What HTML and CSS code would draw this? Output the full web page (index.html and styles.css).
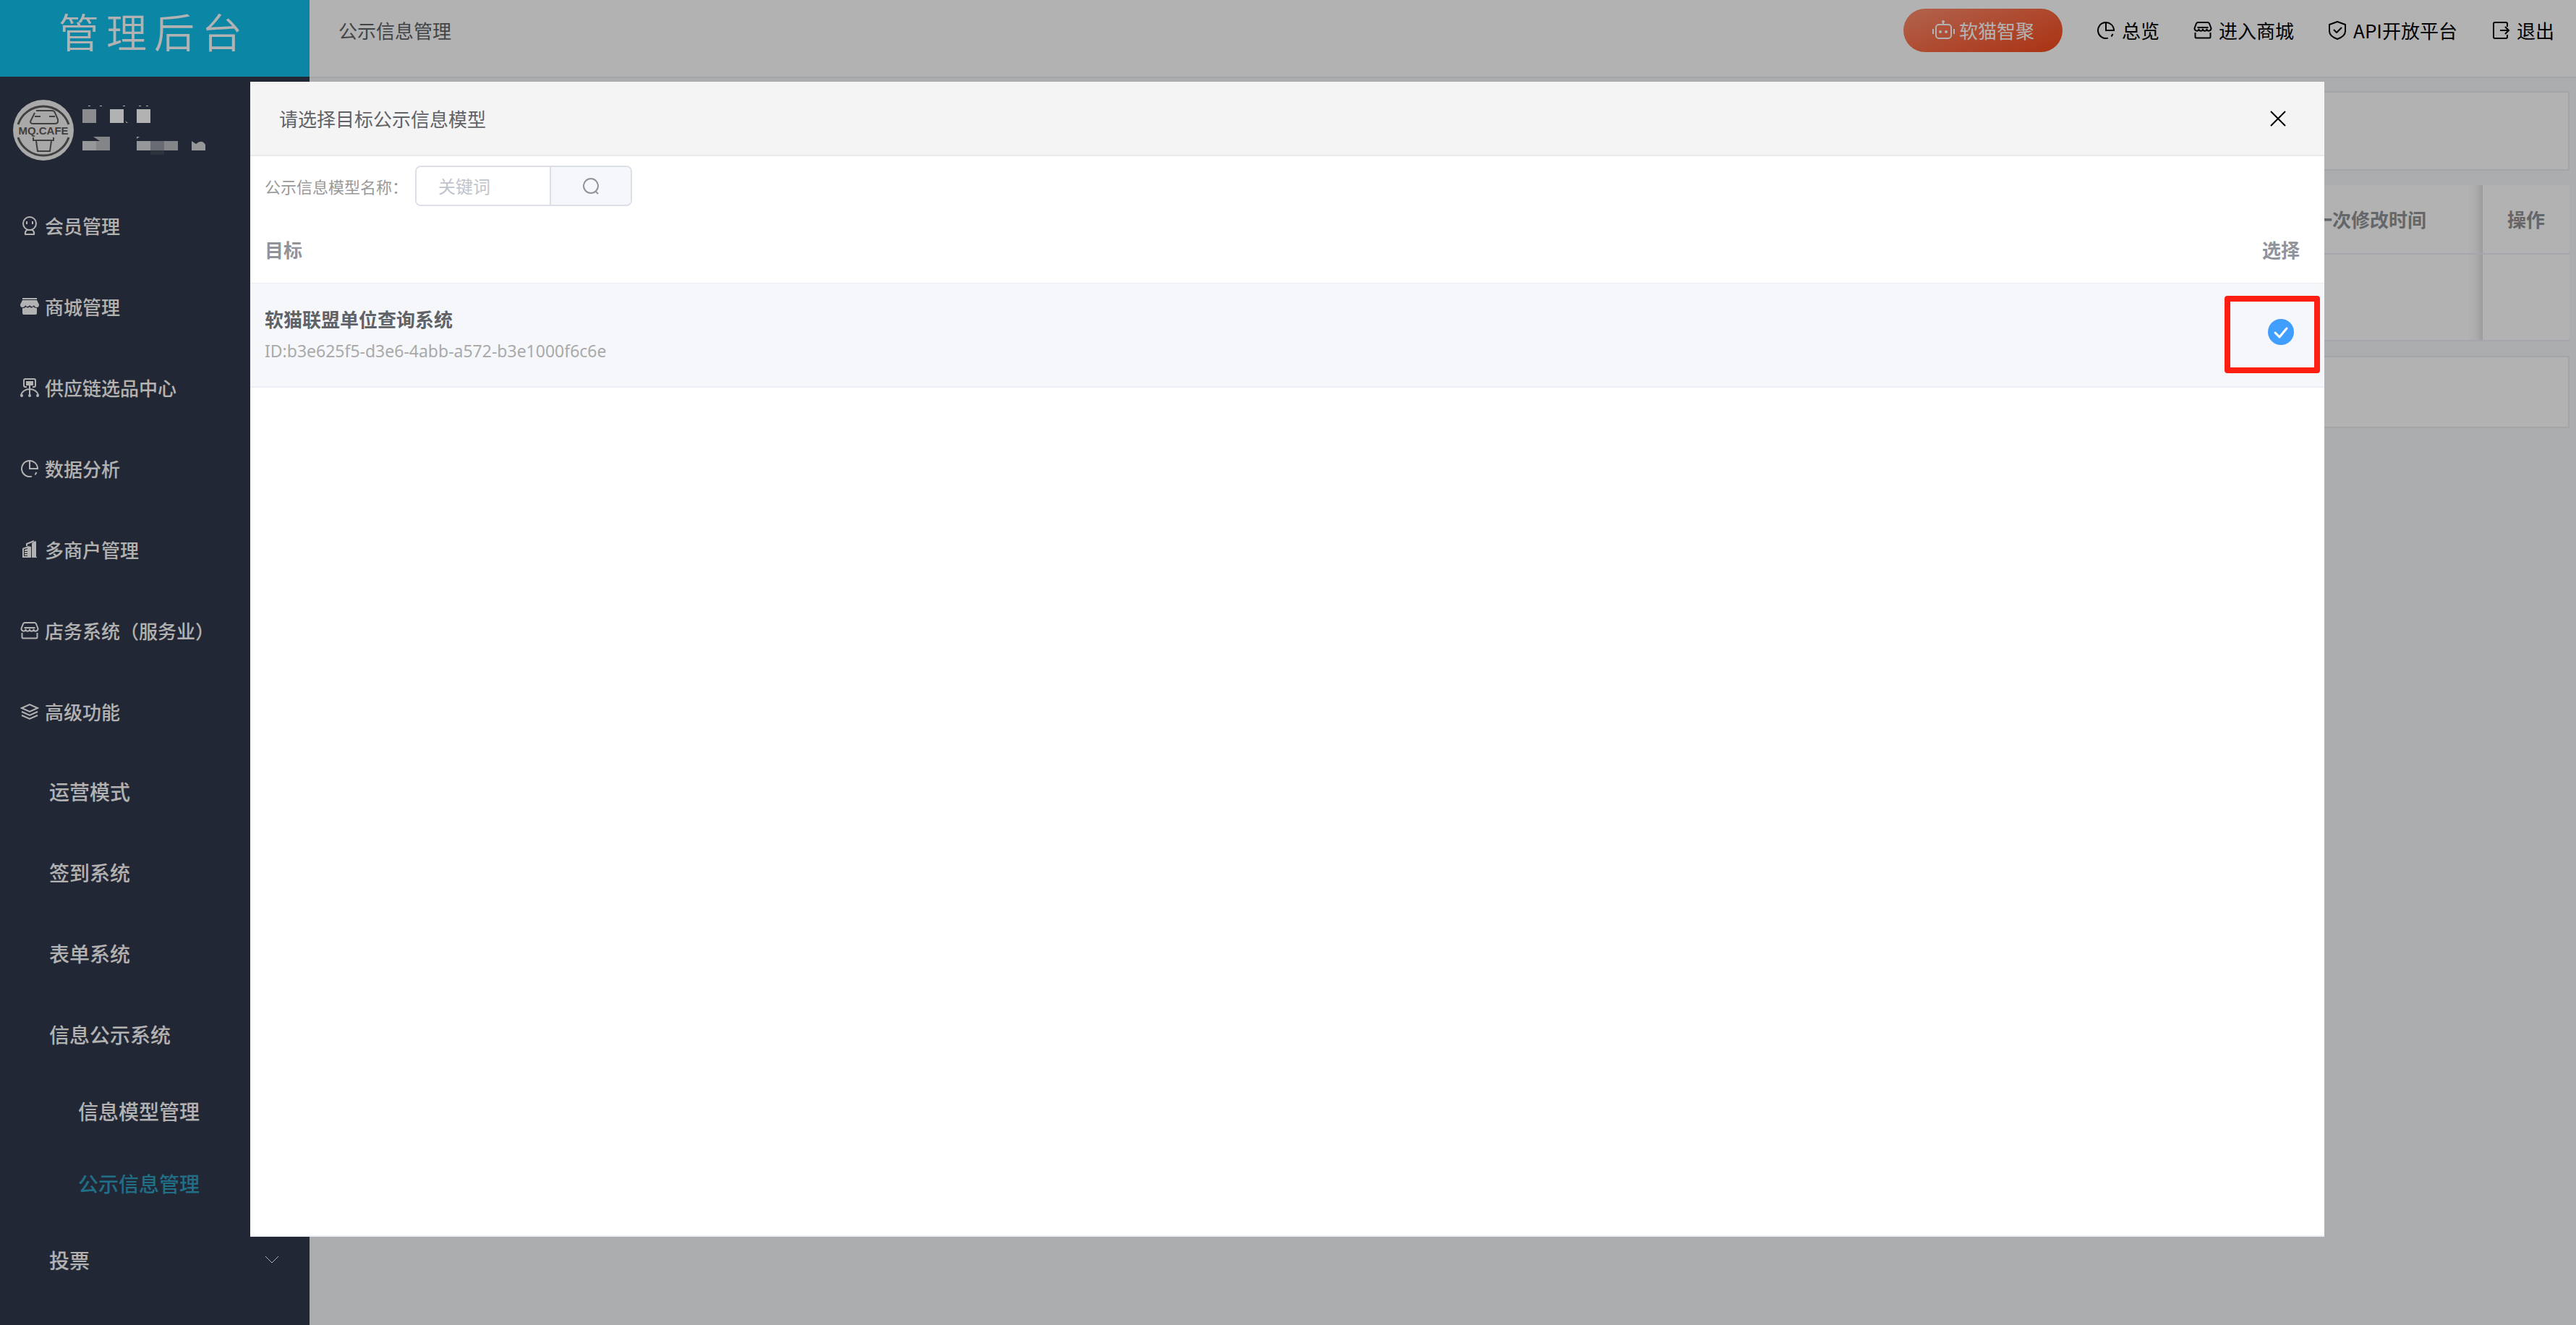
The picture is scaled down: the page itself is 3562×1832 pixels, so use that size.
FILE: index.html
```html
<!DOCTYPE html>
<html lang="zh-CN">
<head>
<meta charset="utf-8">
<title>公示信息管理</title>
<link rel="stylesheet" href="styles.css">
</head>
<body>
<svg class="defs" aria-hidden="true">
  <symbol id="i-pie" viewBox="0 0 26 26"><path fill="none" stroke="currentColor" d="M13 2v11h11A11 11 0 1 0 16 23.600M20.500 21.500l2-3.500"/></symbol>
  <symbol id="i-shop" viewBox="0 0 26 26"><path fill="none" stroke="currentColor" stroke-linejoin="round" d="M6 2h14q1 0 2 1.500l2.500 6.500c0 4-5 5-6 1.500-1 3-4.500 3-5.500 0-1 3-4.500 3-5.500 0-1 3.500-6 2.500-6-1.500L4 3.500Q5 2 6 2zM5.500 9h15M2.500 16v6q0 1.500 1.500 1.500h18q1.500 0 1.500-1.500v-6"/></symbol>
</svg>
<div class="app">
  <aside class="side">
    <div class="logo">管理后台</div>
    <div class="user">
      <svg class="avatar" viewBox="0 0 84 84" role="img" aria-label="MQ.CAFE">
        <circle cx="42" cy="42" r="42" fill="#f2f2f2"/>
        <g fill="none" stroke="#5c5c5c" stroke-width="2"><path d="M7 34a37 37 0 0 1 70 0M7 52a37 37 0 0 0 70 0" stroke-width="3"/><path d="M32 15h22q3 0 4 3l4 9v4q-1 2-4 2H28q-4 0-4-3l6-12M30 23h8M50 23h8M29 33h28M28 52v4h28v-4M32 57l2 14h17l2-14"/></g>
        <text x="42" y="48" text-anchor="middle" class="avatar-text">MQ.CAFE</text>
      </svg>
      <svg class="mask" viewBox="0 0 172 76" aria-hidden="true">
        <path fill="#c8c8ce" d="M0 13h19v19H0z"/>
        <path fill="#fff" d="M38 13h19v19H38zM75 13h19v19H75zM8 8h3v1H8zM24 8h3v1h-3zM56 8h3v1h-3zM78 8h3v1h-3zM88 8h3v1h-3zM59 29l4 3h-2z"/>
        <path fill="#d7d8dc" d="M0 57h19v13H0zM75 51h4l-4 3zM75 57h19v13H75zM151 57l6 4q8-7 13 1v8h-19z"/>
        <path fill="#bebfc5" d="M15 51h23v19H19V57h5zM113 57h19v13h-19z"/>
        <path fill="#969aa5" d="M94 57h19v13H94z"/>
        <path fill="#414857" d="M94 70h19v6H94z"/>
      </svg>
    </div>
    <nav class="menu">
      <a class="item" href="#"><svg class="ico" viewBox="0 0 26 26"><g fill="none" stroke="currentColor"><circle cx="13" cy="10" r="9"/><path d="M9 7v4M17 7v4M9 19h8q3 3 2 6H7q-1-3 2-6z"/></g></svg>会员管理</a>
      <a class="item" href="#"><svg class="ico" viewBox="0 0 26 26"><path fill="currentColor" d="M3 1h20v2H3zM3 4h20l3 6q0 4-3 4-3 0-4-3-3 4-6 0-3 4-6 0-1 3-4 3-3 0-3-4zM3 15q4 0 5-2 2 3 5 0 2 3 5 0 2 2 5 2v7q0 2-2 2H5q-2 0-2-2z"/></svg>商城管理</a>
      <a class="item" href="#"><svg class="ico" viewBox="0 0 26 26"><path fill="none" stroke="currentColor" d="M9 12H7q-2 0-2-2V3q0-2 2-2h12q2 0 2 2v7q0 2-2 2h-2M13 9v16M1 24c2-12 22-12 24 0"/><path fill="currentColor" d="M8 4h10v6H8z"/><circle cx="2" cy="24" r="2" fill="currentColor"/><circle cx="13" cy="24" r="2" fill="currentColor"/><circle cx="24" cy="24" r="2" fill="currentColor"/></svg>供应链选品中心</a>
      <a class="item" href="#"><svg class="ico"><use href="#i-pie"/></svg>数据分析</a>
      <a class="item" href="#"><svg class="ico" viewBox="0 0 26 26"><path fill="currentColor" d="M16 4l5-3 1 1v21h1v1h-7zM3 11l8-3 4 1v15H3zM5 12v10h5v-1H6v-2h4v-1H6v-2h4v-1H6v-2l4-1v-1z"/><path fill="none" stroke="currentColor" d="M9 8V5l10-4"/></svg>多商户管理</a>
      <a class="item" href="#"><svg class="ico"><use href="#i-shop"/></svg>店务系统（服务业）</a>
      <a class="item" href="#"><svg class="ico" viewBox="0 0 26 26"><path fill="none" stroke="currentColor" d="M2 8l11-5 11 5-11 5zM2 13l11 5 11-5M2 18l11 5 11-5"/></svg>高级功能</a>
      <a class="item sub" href="#">运营模式</a>
      <a class="item sub" href="#">签到系统</a>
      <a class="item sub" href="#">表单系统</a>
      <a class="item sub" href="#">信息公示系统</a>
      <a class="item leaf" href="#">信息模型管理</a>
      <a class="item leaf active" href="#">公示信息管理</a>
      <a class="item sub" href="#">投票<svg class="chev" viewBox="0 0 20 12"><path fill="none" stroke="currentColor" d="M1 1l9 9 9-9"/></svg></a>
    </nav>
  </aside>
  <div class="main">
    <header class="top">
      <span class="crumb">公示信息管理</span>
      <button class="ai" type="button"><svg class="bot" viewBox="0 0 32 32"><g fill="none" stroke="currentColor" stroke-width="2"><rect x="6" y="8" width="21" height="19" rx="4"/><path d="M16 8V4M2 14v7M31 14v7"/></g><circle cx="16" cy="4" r="2" fill="currentColor"/><circle cx="12" cy="18" r="2" fill="currentColor"/><circle cx="20" cy="18" r="2" fill="currentColor"/></svg>软猫智聚</button>
      <a class="link" href="#"><svg class="ico"><use href="#i-pie"/></svg>总览</a>
      <a class="link" href="#"><svg class="ico"><use href="#i-shop"/></svg>进入商城</a>
      <a class="link" href="#"><svg class="ico" viewBox="0 0 26 26"><path fill="none" stroke="currentColor" stroke-linejoin="round" d="M13 1l11 4v9q0 7-11 11Q2 21 2 14V5zM8 12l4 4 7-7"/></svg>API开放平台</a>
      <a class="link" href="#"><svg class="ico" viewBox="0 0 26 26"><path fill="none" stroke="currentColor" d="M22 8V4q0-2-2-2H5Q3 2 3 4v18q0 2 2 2h15q2 0 2-2v-3M12 13h12M19 8l5 5-5 5"/></svg>退出</a>
    </header>
    <main class="content">
      <section class="card filter"></section>
      <table class="list">
        <thead><tr><th class="time">一次修改时间</th><th class="op">操作</th></tr></thead>
        <tbody><tr><td></td><td class="op"></td></tr></tbody>
      </table>
      <section class="card pager"></section>
    </main>
  </div>
</div>
<div class="backdrop">
  <div class="dialog" role="dialog" aria-labelledby="dlg-title">
    <div class="dlg-head">
      <h2 class="dlg-title" id="dlg-title">请选择目标公示信息模型</h2>
      <button class="close" type="button" aria-label="关闭"><svg viewBox="0 0 22 22"><path fill="none" stroke="currentColor" stroke-width="2" d="M1 1l20 20M21 1L1 21"/></svg></button>
    </div>
    <form class="search">
      <label for="kw">公示信息模型名称<span class="colon">：</span></label>
      <div class="group">
        <input id="kw" type="text" placeholder="关键词">
        <button type="button" aria-label="搜索"><svg viewBox="0 0 24 24"><g fill="none" stroke="currentColor" stroke-width="2"><circle cx="12" cy="12" r="10"/><path d="M19 20l3 3"/></g></svg></button>
      </div>
    </form>
    <table class="targets">
      <thead><tr><th>目标</th><th class="pick">选择</th></tr></thead>
      <tbody><tr>
        <td><div class="name">软猫联盟单位查询系统</div><div class="id">ID:b3e625f5-d3e6-4abb-a572-b3e1000f6c6e</div></td>
        <td class="pick"><button class="check" type="button" aria-label="选择"><svg viewBox="0 0 36 36"><circle cx="18" cy="18" r="18" fill="#409eff"/><path fill="none" stroke="#fff" stroke-width="3" stroke-linecap="round" stroke-linejoin="round" d="M10 19l6 6 10-12"/></svg></button><span class="mark"></span></td>
      </tr></tbody>
    </table>
  </div>
</div>
</body>
</html>
```
FILE: styles.css
```css
* { box-sizing: border-box; }
body {
  margin: 0;
  font-family: "Noto Sans CJK SC", sans-serif;
  font-size: 26px;
  line-height: 40px;
  color: #606266;
}
a { color: inherit; text-decoration: none; }
button { border: 0; padding: 0; background: none; font: inherit; color: inherit; display: flex; align-items: center; justify-content: center; }
table { border-collapse: separate; border-spacing: 0; table-layout: fixed; width: 100%; }
th, td { padding: 0; text-align: left; font-weight: 400; }
th { font-weight: 700; }
svg { flex: none; display: block; }
.defs { display: none; }
.ico { width: 26px; height: 26px; stroke-width: 2; }

.app { display: grid; grid-template-columns: 428px 1fr; min-height: 100vh; }
.side { background: #32394c; color: #fff; }
.logo {
  height: 106px;
  padding: 2px 0 0 81px;
  background: #11c1ec;
  font-size: 56px;
  font-weight: 350;
  line-height: 80px;
  letter-spacing: 10px;
}
.user { display: flex; gap: 12px; height: 149px; padding: 32px 18px 0; }
.avatar { width: 84px; height: 84px; }
.avatar-text { font: 700 15px "Liberation Sans", sans-serif; fill: #5c5c5c; }
.mask { width: 172px; height: 76px; }
.menu { font-weight: 500; }
.item { display: flex; align-items: center; gap: 8px; height: 112px; padding: 2px 0 0 28px; }
.item.sub, .item.leaf { padding: 0 42px 2px 68px; font-size: 28px; }
.item.leaf { height: 100px; padding-left: 108px; }
.item.active { color: #2f9fc2; }
.chev { width: 20px; height: 12px; margin-left: auto; }

.main { background: #f7f8fb; }
.top {
  display: flex;
  align-items: center;
  gap: 47px;
  height: 108px;
  padding: 0 30px 22px 40px;
  background: #fff;
  border-bottom: 2px solid #ebecef;
}
.crumb { margin-right: auto; }
.ai {
  gap: 6px;
  width: 220px;
  height: 60px;
  border-radius: 30px;
  background: linear-gradient(160deg, #ff8f70, #f4471b);
  color: #fff;
}
.bot { width: 32px; height: 32px; }
.link { display: flex; align-items: center; gap: 9px; color: #000; }
.content { display: flex; flex-direction: column; gap: 20px; padding: 18px 9px 0 8px; }
.card { background: #fff; border: 2px solid #ebecef; }
.filter { height: 110px; }
.pager { height: 100px; }
.list { background: #fff; color: #909399; }
.list th, .list td { height: 96px; border-bottom: 2px solid #ebeef5; }
.list td { height: 120px; }
.list .time { padding-right: 78px; text-align: right; }
.list .op {
  position: relative;
  width: 120px;
  text-align: center;
  background: #fff;
}
.list .op::before {
  content: "";
  position: absolute;
  top: 0;
  bottom: 0;
  right: 100%;
  width: 20px;
  background: linear-gradient(to left, rgba(0, 0, 0, .12), rgba(0, 0, 0, .03) 50%, transparent);
}

.backdrop {
  position: fixed;
  inset: 0;
  display: flex;
  padding: 113px 348px 122px 346px;
  background: rgba(0, 0, 0, .3);
}
.dialog { flex: 1; background: #fff; border-bottom: 2px solid #ebeef5; }
.dlg-head {
  display: flex;
  align-items: center;
  justify-content: space-between;
  height: 103px;
  padding: 0 53px 0 40px;
  background: #f4f4f4;
  border-bottom: 2px solid #eaeaea;
}
.dlg-title { margin: 0; font-size: 26px; font-weight: 400; }
.close { color: #000; }
.close svg { width: 22px; height: 22px; }
.search { display: flex; align-items: center; gap: 10px; height: 82px; padding: 0 20px; }
.search label { font-size: 22px; color: #999; }
.colon { font-family: "Noto Sans CJK TC", sans-serif; }
.group { display: flex; width: 300px; height: 56px; border: 2px solid #dcdfe6; border-radius: 8px; overflow: hidden; }
.group input {
  flex: 1;
  min-width: 0;
  padding: 0 30px;
  border: 0;
  border-right: 2px solid #dcdfe6;
  font: inherit;
  font-size: 24px;
}
.group input::placeholder { color: #c0c4cc; opacity: 1; }
.group button { width: 110px; background: #f5f7fa; color: #909399; }
.group svg { width: 24px; height: 24px; }
.targets th { height: 94px; padding-left: 20px; border-bottom: 1px solid #ebeef5; color: #909399; }
.targets td { height: 144px; padding-left: 20px; background: #f5f7fb; border-bottom: 2px solid #ebeef5; }
.targets .pick { position: relative; width: 120px; padding: 0; text-align: center; }
.name { font-weight: 700; line-height: 44px; }
.id { font-family: "Noto Sans", sans-serif; font-size: 23px; line-height: 44px; color: #aaa; }
.check { margin: 0 auto 8px; }
.check svg { width: 36px; height: 36px; }
.mark {
  position: absolute;
  top: 17px;
  right: 6px;
  width: 132px;
  height: 107px;
  border: 8px solid #ff1f12;
  border-radius: 4px;
}
```
